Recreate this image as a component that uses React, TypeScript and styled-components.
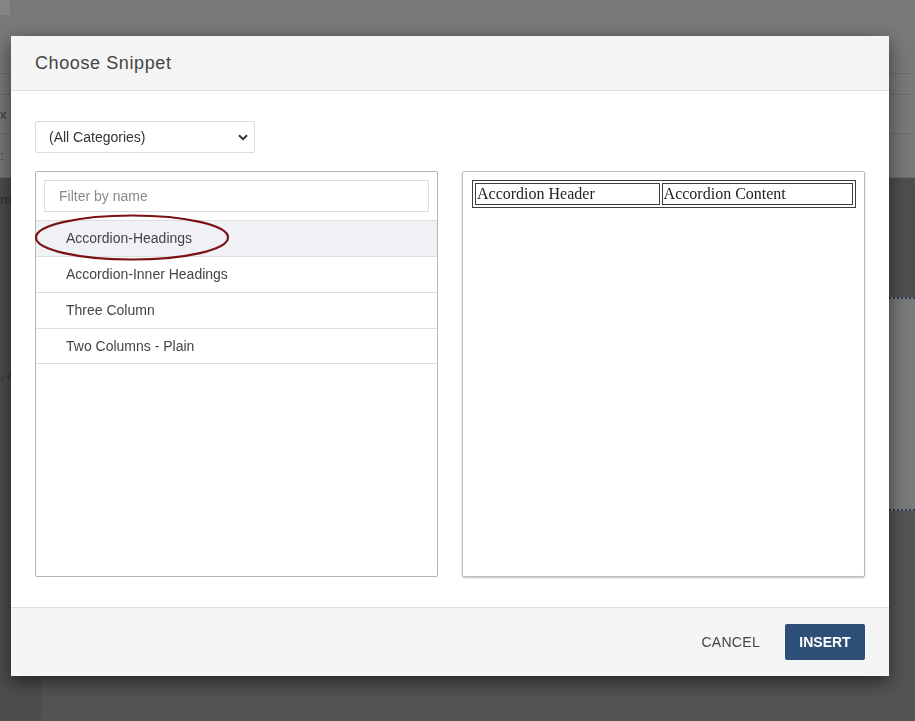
import React, { useState } from "react"
import styled, { createGlobalStyle } from "styled-components"

const GlobalStyle = createGlobalStyle`
  html, body {
    margin: 0;
    padding: 0;
    height: 100%;
    overflow: hidden;
  }
  body {
    font-family: "Liberation Sans", Arial, sans-serif;
    background-color: #545454;
  }
`

// dimmed page behind the dialog
const Page = styled.div`
  width: 915px;
  height: 721px;
  display: flex;
  flex-direction: column;
  background-color: #545454;
`

const TopBar = styled.div`
  height: 178px;
  background-color: #797979;
  display: flex;
  flex-direction: column;
`

const BarRow = styled.div<{ $h: number }>`
  height: ${(p) => p.$h}px;
  border-bottom: 1px solid #6c6c6c;
  color: #3a3a3a;
  font-size: 13px;
  display: flex;
  align-items: center;
  box-sizing: border-box;
`

const Corner = styled.div`
  align-self: flex-start;
  width: 10px;
  height: 15px;
  background-color: #858585;
`

const Body = styled.div`
  flex: 1;
  display: grid;
  grid-template-columns: 42px 1fr 26px;
`

const SideStrip = styled.div`
  background-color: #4d4d4d;
  color: #2f2f2f;
  font-size: 13px;
  padding-top: 14px;
  display: flex;
  flex-direction: column;
  gap: 160px;
`

const Main = styled.div`
  background-color: #545454;
`

const RightEdge = styled.div`
  display: flex;
  flex-direction: column;
`

const EdgeBlock = styled.div<{ $h: number; $bg: string; $dotted?: boolean }>`
  height: ${(p) => p.$h}px;
  background-color: ${(p) => p.$bg};
  border-top: ${(p) => (p.$dotted ? "2px dotted #2c3e55" : "none")};
  border-bottom: ${(p) => (p.$dotted ? "2px dotted #2c3e55" : "none")};
  box-sizing: border-box;
`

// dialog
const Dialog = styled.div`
  position: fixed;
  left: 11px;
  top: 36px;
  width: 878px;
  height: 640px;
  background-color: #fff;
  box-shadow: 0 6px 18px rgba(0, 0, 0, 0.55);
  display: flex;
  flex-direction: column;
`

const Header = styled.div`
  height: 54px;
  background-color: #f5f5f5;
  border-bottom: 1px solid #dedede;
  display: flex;
  align-items: center;
  padding: 0 24px;
`

const Title = styled.h2`
  margin: 0;
  font-size: 18px;
  font-weight: normal;
  letter-spacing: 0.6px;
  color: #444;
`

const Content = styled.div`
  flex: 1;
  padding: 30px 24px 30px;
  display: flex;
  flex-direction: column;
  gap: 18px;
`

const SelectBox = styled.div`
  width: 220px;
  height: 32px;
  box-sizing: border-box;
  border: 1px solid #dcdcdc;
  border-radius: 2px;
  display: flex;
  align-items: center;
  padding-right: 6px;
`

const Select = styled.select`
  flex: 1;
  appearance: none;
  border: none;
  background: transparent;
  font-family: "Liberation Sans", Arial, sans-serif;
  font-size: 14px;
  color: #333;
  padding-left: 13px;
  height: 100%;
  outline: none;
`

const Panels = styled.div`
  flex: 1;
  display: grid;
  grid-template-columns: 1fr 1fr;
  gap: 24px;
`

const ListPanel = styled.div`
  border: 1px solid #b4b4b4;
  border-radius: 2px;
  display: flex;
  flex-direction: column;
`

const FilterWrap = styled.div`
  padding: 8px;
`

const FilterInput = styled.input`
  width: 100%;
  height: 32px;
  box-sizing: border-box;
  border: 1px solid #dcdcdc;
  padding: 0 14px;
  font-family: "Liberation Sans", Arial, sans-serif;
  font-size: 14px;
  color: #333;
  outline: none;
  &::placeholder {
    color: #8a8a8a;
  }
`

const List = styled.ul`
  list-style: none;
  margin: 0;
  padding: 0;
`

const Item = styled.li<{ $active?: boolean }>`
  position: relative;
  height: 36px;
  box-sizing: border-box;
  border-top: 1px solid #dedede;
  padding-left: 30px;
  padding-bottom: 1px;
  display: flex;
  align-items: center;
  font-size: 14px;
  color: #444;
  background-color: ${(p) => (p.$active ? "#f0f1f5" : "#fff")};
  cursor: pointer;
  &:last-child {
    border-bottom: 1px solid #dedede;
  }
`

const Circle = styled.svg`
  position: absolute;
  left: -2px;
  top: -7px;
  z-index: 2;
  overflow: visible;
  pointer-events: none;
`

const PreviewPanel = styled.div`
  border: 1px solid #bdbdbd;
  border-radius: 2px;
  padding: 8px 8px 8px 9px;
  box-shadow: 0 1px 2px rgba(0, 0, 0, 0.25);
`

const PreviewTable = styled.table`
  width: 100%;
  border: 1px solid #3c3c3c;
  border-spacing: 2px;
  font-family: "Liberation Serif", "Times New Roman", serif;
  font-size: 16px;
  color: #222;
  td {
    border: 1px solid #3c3c3c;
    padding: 1px;
  }
`

const Footer = styled.div`
  height: 69px;
  box-sizing: border-box;
  background-color: #f5f5f5;
  border-top: 1px solid #dedede;
  display: flex;
  align-items: center;
  justify-content: flex-end;
  padding: 0 24px;
  gap: 9px;
`

const TextButton = styled.button`
  background: transparent;
  border: none;
  height: 36px;
  padding: 0 16px;
  font-family: "Liberation Sans", Arial, sans-serif;
  font-size: 14px;
  letter-spacing: 0.3px;
  color: #444;
  cursor: pointer;
`

const PrimaryButton = styled.button`
  background-color: #2e5078;
  border: none;
  border-radius: 2px;
  height: 36px;
  width: 80px;
  font-family: "Liberation Sans", Arial, sans-serif;
  font-size: 14px;
  font-weight: bold;
  color: #fff;
  cursor: pointer;
`

const snippets = [
  "Accordion-Headings",
  "Accordion-Inner Headings",
  "Three Column",
  "Two Columns - Plain",
]

export default function App() {
  const [selected, setSelected] = useState(0)

  return (
    <>
      <GlobalStyle />
      <Page>
        <TopBar>
          <BarRow $h={74}>
            <Corner />
          </BarRow>
          <BarRow $h={21} />
          <BarRow $h={39}>x</BarRow>
          <BarRow $h={44}>:</BarRow>
        </TopBar>
        <Body>
          <SideStrip>
            <span>ro</span>
            <span>, a</span>
          </SideStrip>
          <Main />
          <RightEdge>
            <EdgeBlock $h={119} $bg="#4f4f4f" />
            <EdgeBlock $h={214} $bg="#7a7a7a" $dotted />
            <EdgeBlock $h={210} $bg="#545454" />
          </RightEdge>
        </Body>
      </Page>

      <Dialog>
        <Header>
          <Title>Choose Snippet</Title>
        </Header>
        <Content>
          <SelectBox>
            <Select defaultValue="all">
              <option value="all">(All Categories)</option>
            </Select>
            <svg width="10" height="7" viewBox="0 0 10 7">
              <path d="M1 1.2 L5 5.2 L9 1.2" fill="none" stroke="#333" strokeWidth="2" />
            </svg>
          </SelectBox>
          <Panels>
            <ListPanel>
              <FilterWrap>
                <FilterInput placeholder="Filter by name" />
              </FilterWrap>
              <List>
                {snippets.map((name, i) => (
                  <Item key={name} $active={i === selected} onClick={() => setSelected(i)}>
                    {name}
                    {i === 0 && (
                      <Circle width="196" height="47" viewBox="0 0 196 47">
                        <ellipse cx="98" cy="23.5" rx="96" ry="22" fill="none" stroke="#7a1214" strokeWidth="2.2" />
                      </Circle>
                    )}
                  </Item>
                ))}
              </List>
            </ListPanel>
            <PreviewPanel>
              <PreviewTable>
                <tbody>
                  <tr>
                    <td>Accordion Header</td>
                    <td>Accordion Content</td>
                  </tr>
                </tbody>
              </PreviewTable>
            </PreviewPanel>
          </Panels>
        </Content>
        <Footer>
          <TextButton>CANCEL</TextButton>
          <PrimaryButton>INSERT</PrimaryButton>
        </Footer>
      </Dialog>
    </>
  )
}
